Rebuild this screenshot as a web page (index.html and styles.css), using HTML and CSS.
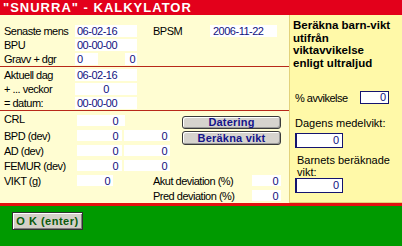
FILE: index.html
```html
<!DOCTYPE html>
<html lang="sv">
<head>
<meta charset="utf-8">
<title>SNURRA - KALKYLATOR</title>
<link rel="stylesheet" href="styles.css">
</head>
<body>
<div class="app">
  <div class="titlebar">"SNURRA" - KALKYLATOR</div>
  <div class="main">
    <div class="left">
      <div class="sec sec1">
        <div class="row">
          <span class="lbl">Senaste mens</span>
          <span class="val w62">06-02-16</span>
          <span class="lbl-bpsm">BPSM</span>
          <span class="val w67">2006-11-22</span>
        </div>
        <div class="row">
          <span class="lbl">BPU</span>
          <span class="val w62">00-00-00</span>
        </div>
        <div class="row">
          <span class="lbl">Gravv + dgr</span>
          <span class="val w23">0</span>
          <span class="val w12 right gap27">0</span>
        </div>
      </div>
      <div class="sec sec2">
        <div class="row">
          <span class="lbl">Aktuell dag</span>
          <span class="val w62">06-02-16</span>
        </div>
        <div class="row">
          <span class="lbl">+ ... veckor</span>
          <span class="val w62 center">0</span>
        </div>
        <div class="row">
          <span class="lbl">= datum:</span>
          <span class="val w62">00-00-00</span>
        </div>
      </div>
      <div class="sec sec3">
        <div class="row r17">
          <span class="lbl3">CRL</span>
          <span class="sval w48 pr7">0</span>
          <button class="btn btn-dat">Datering</button>
        </div>
        <div class="row r15">
          <span class="lbl3">BPD (dev)</span>
          <span class="sval w45 pr4">0</span>
          <span class="sval w46 pr3 gap2">0</span>
          <button class="btn btn-calc">Beräkna vikt</button>
        </div>
        <div class="row r15">
          <span class="lbl3">AD (dev)</span>
          <span class="sval w45 pr4">0</span>
          <span class="sval w46 pr3 gap2">0</span>
        </div>
        <div class="row r15">
          <span class="lbl3">FEMUR (dev)</span>
          <span class="sval w45 pr4">0</span>
          <span class="sval w46 pr3 gap2">0</span>
        </div>
        <div class="row r15">
          <span class="lbl3">VIKT (g)</span>
          <span class="sval w36 pr3">0</span>
          <span class="dev">Akut deviation (%)</span>
          <span class="sval w29 pr3">0</span>
        </div>
        <div class="row r14">
          <span class="lbl3"></span>
          <span class="spacer36"></span>
          <span class="dev">Pred deviation (%)</span>
          <span class="sval w29 pr3">0</span>
        </div>
      </div>
    </div>
    <div class="panel">
      <div class="ph">Beräkna barn-vikt<br>utifrån<br>viktavvikelse<br>enligt ultraljud</div>
      <div class="prow">
        <span class="plbl">% avvikelse</span>
        <span class="pbox">0</span>
      </div>
      <div class="ptext">Dagens medelvikt:</div>
      <div class="pbox2">0</div>
      <div class="ptext2">Barnets beräknade<br>vikt:</div>
      <div class="pbox2 nomargin">0</div>
    </div>
  </div>
  <div class="redline"></div>
  <div class="footer">
    <button class="ok">O K (enter)</button>
  </div>
</div>
</body>
</html>
```

FILE: styles.css
```css
* {
  box-sizing: border-box;
}

body {
  margin: 0;
  width: 402px;
  height: 246px;
  overflow: hidden;
  font-family: "Liberation Sans", Arial, sans-serif;
  font-size: 11px;
  color: #000;
}

.app {
  display: flex;
  flex-direction: column;
  height: 246px;
}

.titlebar {
  height: 15px;
  overflow: hidden;
  background: #e3001b;
  color: #fff;
  font-weight: bold;
  font-size: 13px;
  letter-spacing: 1px;
  line-height: 16px;
  padding-left: 3px;
  white-space: nowrap;
}

.main {
  display: flex;
  height: 188px;
}

.left {
  width: 289px;
  background: #fffdd2;
  letter-spacing: -0.5px;
}

.sec {
  border-bottom: 1px solid #b8281a;
}

.sec1 {
  padding-top: 9px;
}

.sec2 {
  padding-top: 1px;
}

.sec3 {
  padding-top: 1px;
  border-bottom: none;
}

.row {
  display: flex;
  align-items: center;
  height: 14px;
  padding-left: 4px;
  line-height: 14px;
  white-space: nowrap;
}

.lbl {
  width: 71px;
}

.lbl3 {
  width: 73px;
}

.lbl-bpsm {
  margin-left: 16px;
  width: 57px;
}

.val {
  background: #fff;
  color: #10107e;
  height: 12px;
  line-height: 12px;
  padding-left: 2px;
}

.right {
  text-align: right;
  padding-left: 0;
  padding-right: 2px;
}

.center {
  text-align: center;
  padding-left: 0;
}

.gap27 {
  margin-left: 27px;
}

.gap2 {
  margin-left: 2px;
}

.w12 { width: 12px; }
.w23 { width: 23px; }
.w29 { width: 29px; }
.w36 { width: 36px; }
.w45 { width: 45px; }
.w46 { width: 46px; }
.w48 { width: 48px; }
.w62 { width: 62px; }
.w67 { width: 67px; padding-left: 3px; }

.r17 {
  height: 17px;
  align-items: flex-start;
}

.r15 {
  height: 15px;
  align-items: flex-start;
}

.r14 {
  height: 14px;
  align-items: flex-start;
}

.sval {
  background: #fff;
  color: #10107e;
  height: 11px;
  line-height: 12px;
  margin-top: 1px;
  text-align: right;
}

.r17 .sval {
  margin-top: 3px;
}

.pr3 { padding-right: 3px; }
.pr4 { padding-right: 4px; }
.pr7 { padding-right: 7px; }

.dev {
  margin-left: 40px;
  width: 99px;
}

.spacer36 {
  width: 36px;
}

.btn {
  margin-left: auto;
  margin-right: 8px;
  width: 99px;
  padding: 0;
  background: #d6d3ce;
  border: 1px solid #3a3a3a;
  border-radius: 3px;
  box-shadow: inset 1px 1px 0 #ffffff, inset -1px -1px 0 #9a9a9a;
  font-family: "Liberation Sans", Arial, sans-serif;
  font-weight: bold;
  font-size: 11px;
  letter-spacing: 0.2px;
  color: #14148a;
  text-align: center;
}

.btn-dat {
  margin-top: 4px;
  height: 13px;
  line-height: 11px;
}

.btn-calc {
  margin-top: 2px;
  height: 14px;
  line-height: 12px;
}

.panel {
  flex: 1;
  background: #fff9a8;
  border-left: 1px solid #e2d27a;
  border-bottom: 1px solid #e2d27a;
  padding: 4px 0 0 3px;
}

.ph {
  font-weight: bold;
  font-size: 11.5px;
  line-height: 12.5px;
  white-space: nowrap;
}

.prow {
  display: flex;
  align-items: center;
  margin-top: 22px;
  height: 13px;
  padding-left: 2px;
  letter-spacing: -0.5px;
}

.plbl {
  width: 65px;
}

.pbox {
  width: 29px;
  height: 13px;
  background: #fff;
  border: 1px solid #14146e;
  color: #10107e;
  text-align: right;
  padding-right: 2px;
  line-height: 11px;
  letter-spacing: 0;
}

.ptext {
  margin-top: 12px;
  padding-left: 2px;
  line-height: 14px;
}

.pbox2 {
  margin: 3px 0 0 2px;
  width: 48px;
  height: 15px;
  background: #fff;
  border: 1px solid #14146e;
  border-left-width: 2px;
  color: #10107e;
  text-align: right;
  padding-right: 3px;
  line-height: 13px;
}

.pbox2.nomargin {
  margin-top: 0;
}

.ptext2 {
  margin-top: 6px;
  padding-left: 4px;
  line-height: 12px;
}

.redline {
  height: 3px;
  background: #e41010;
}

.footer {
  flex: 1;
  background: #009a00;
  padding: 6px 0 0 12px;
}

.ok {
  width: 71px;
  height: 18px;
  padding: 0;
  background: #d4d0c8;
  border: 1px solid #303030;
  box-shadow: inset 1px 1px 0 #ffffff, inset -1px -1px 0 #808080;
  font-family: "Liberation Sans", Arial, sans-serif;
  font-weight: bold;
  font-size: 11px;
  letter-spacing: 0.5px;
  color: #0a5a0a;
}
```
